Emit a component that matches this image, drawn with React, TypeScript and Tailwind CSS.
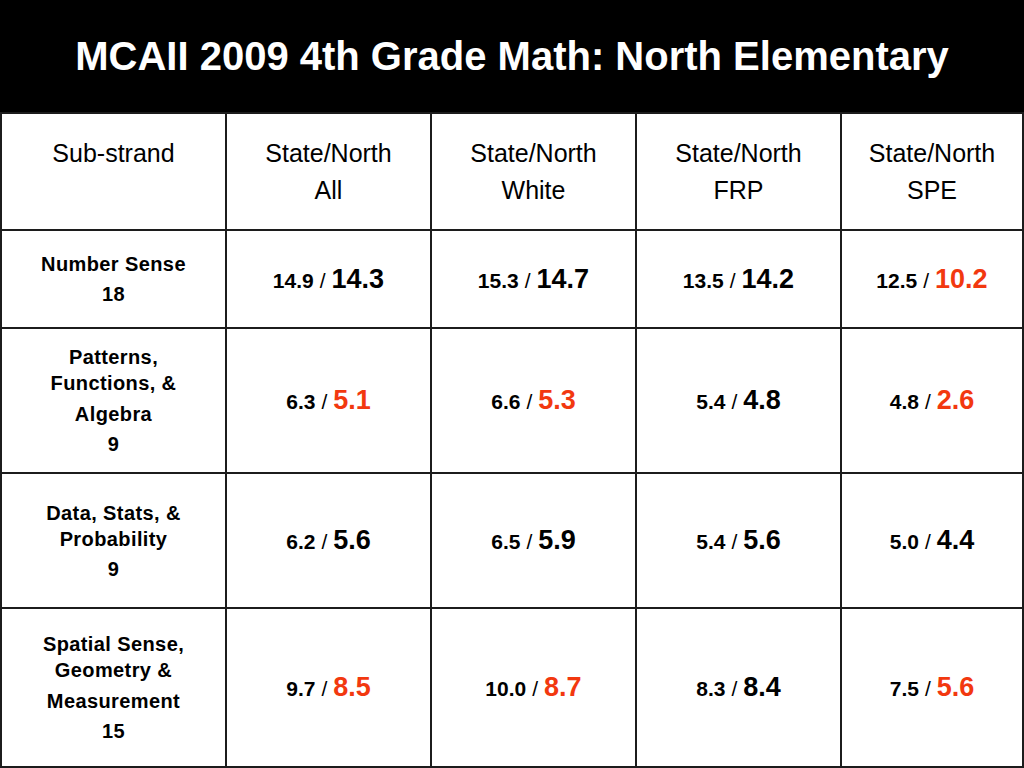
const font = { fontFamily: '"Liberation Sans", Arial, sans-serif' }

type Val = { a: string; b: string; low?: boolean }

const rows: { name: string[]; count: string; vals: Val[] }[] = [
  {
    name: ['Number Sense'],
    count: '18',
    vals: [
      { a: '14.9', b: '14.3' },
      { a: '15.3', b: '14.7' },
      { a: '13.5', b: '14.2' },
      { a: '12.5', b: '10.2', low: true },
    ],
  },
  {
    name: ['Patterns,', 'Functions, &', 'Algebra'],
    count: '9',
    vals: [
      { a: '6.3', b: '5.1', low: true },
      { a: '6.6', b: '5.3', low: true },
      { a: '5.4', b: '4.8' },
      { a: '4.8', b: '2.6', low: true },
    ],
  },
  {
    name: ['Data, Stats, &', 'Probability'],
    count: '9',
    vals: [
      { a: '6.2', b: '5.6' },
      { a: '6.5', b: '5.9' },
      { a: '5.4', b: '5.6' },
      { a: '5.0', b: '4.4' },
    ],
  },
  {
    name: ['Spatial Sense,', 'Geometry &', 'Measurement'],
    count: '15',
    vals: [
      { a: '9.7', b: '8.5', low: true },
      { a: '10.0', b: '8.7', low: true },
      { a: '8.3', b: '8.4' },
      { a: '7.5', b: '5.6', low: true },
    ],
  },
]

const heights = ['h-[98px]', 'h-[145px]', 'h-[135px]', 'h-[159px]']
const groups = ['All', 'White', 'FRP', 'SPE']

export default function App() {
  return (
    <div className="w-[1024px] h-[768px] bg-white text-black overflow-hidden" style={font}>
      <div className="h-[112px] bg-black flex items-center justify-center">
        <h1 className="text-[40px] font-bold text-white leading-none">
          MCAII 2009 4th Grade Math: North Elementary
        </h1>
      </div>

      <div className="grid grid-cols-[225px_205px_205px_205px_1fr] border-l-2 border-t-2 border-[#1c1c1c]">
        <div className="h-[117px] border-r-2 border-b-2 border-[#1c1c1c] flex flex-col items-center justify-center text-[25px] leading-[37px]">
          <span>Sub-strand</span>
          <span>&nbsp;</span>
        </div>
        {groups.map((g) => (
          <div
            key={g}
            className="h-[117px] border-r-2 border-b-2 border-[#1c1c1c] flex flex-col items-center justify-center text-[25px] leading-[37px]"
          >
            <span>State/North</span>
            <span>{g}</span>
          </div>
        ))}

        {rows.map((r, i) => (
          <div key={r.count + i} className="contents">
            <div
              className={`${heights[i]} border-r-2 border-b-2 border-[#1c1c1c] flex flex-col items-center justify-center text-center font-bold text-[20px] tracking-[0.4px]`}
            >
              {r.name.map((n, j) => (
                <span key={n} className={j === 2 ? 'leading-[26px] mt-[5px]' : 'leading-[26px]'}>
                  {n}
                </span>
              ))}
              <span className="leading-[26px] mt-[4px]">{r.count}</span>
            </div>
            {r.vals.map((v, j) => (
              <div
                key={j}
                className={`${heights[i]} border-r-2 border-b-2 border-[#1c1c1c] flex items-center justify-center pt-[3px] font-bold`}
              >
                <div className="leading-[30px] whitespace-nowrap">
                  <span className="text-[21px]">{v.a}</span>
                  <span className="text-[21px] font-normal ml-[6px]">/</span>
                  <span className={`text-[27px] ml-[6px] ${v.low ? 'text-[#f2380f]' : ''}`}>{v.b}</span>
                </div>
              </div>
            ))}
          </div>
        ))}
      </div>
    </div>
  )
}
